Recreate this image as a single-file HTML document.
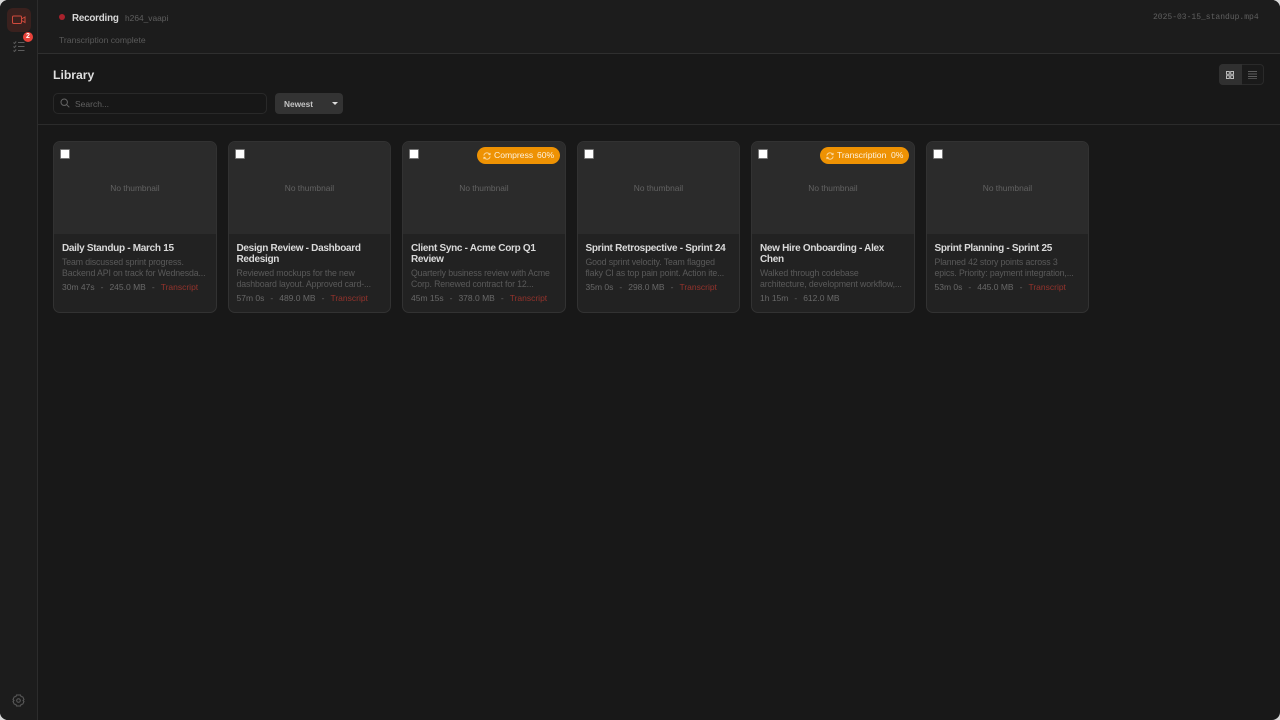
<!DOCTYPE html>
<html><head><meta charset="utf-8">
<style>
*{box-sizing:border-box;margin:0;padding:0}
html,body{width:1280px;height:720px;overflow:hidden;background:#d8d8d8}
body{font-family:"Liberation Sans",sans-serif;position:relative}
.abs,.abs *{white-space:nowrap}
.abs{position:absolute}
#win{position:absolute;left:0;top:0;width:1280px;height:720px;background:#181818;border-radius:8px;overflow:hidden}
#side{position:absolute;left:0;top:0;width:38px;height:720px;background:#1c1c1c;border-right:1px solid #2c2c2c}
#top{position:absolute;left:38px;top:0;width:1242px;height:54px;background:#1c1c1c;border-bottom:1px solid #2f2f2f}
#hr{position:absolute;left:38px;top:124px;width:1242px;height:1px;background:#2b2b2b}
.card{position:absolute;top:141px;width:163.9px;height:172px;background:#222;border:1px solid #323232;border-radius:7px;overflow:hidden}
.th{position:absolute;left:0;top:0;width:100%;height:92px;background:#2b2b2b}
.nt{position:absolute;left:0;top:41px;width:100%;text-align:center;font-size:8.4px;line-height:11px;color:#626262}
.cb{position:absolute;left:6px;top:7px;width:10px;height:10px;background:#fff;border:1px solid #777;border-radius:1px}
.t{position:absolute;left:8px;top:100.5px;font-size:10px;line-height:11.5px;font-weight:700;color:#dadada;letter-spacing:-.3px;white-space:nowrap}
.d{position:absolute;left:8px;font-size:8.75px;line-height:11px;color:#5a5a5a;letter-spacing:-.12px;white-space:nowrap}
.m{position:absolute;left:8px;font-size:8.5px;line-height:11px;color:#686868;white-space:nowrap}
.m span{margin:0 6px}
.m b{font-weight:400;color:#94332c}
.bd{position:absolute;top:5px;height:17px;border-radius:9px;background:#ee9203;color:#fdf2df;font-size:8.6px;line-height:17px;white-space:nowrap}
.bd svg{position:absolute;left:6px;top:4.5px}
.bd i{position:absolute;top:0;font-style:normal}
</style></head><body>
<div id="win">
<div id="side"></div>
<div id="top"></div>
<div id="hr"></div>

<div class="abs" style="left:7px;top:8px;width:24px;height:24px;border-radius:6px;background:#3a211e"></div>
<svg class="abs" style="left:12px;top:14px" width="14" height="12" viewBox="0 0 14 12" fill="none" stroke="#d04a3c" stroke-width="1"><rect x=".5" y="2" width="9" height="7.5" rx="1.2"/><path d="M9.5 5l3.5-2v5.5l-3.5-2"/></svg>
<svg class="abs" style="left:13px;top:41px" width="12" height="11" viewBox="0 0 12 11" fill="none" stroke="#5c5c5c" stroke-width="1"><path d="M5 1.5h6.5M5 5.5h6.5M5 9.5h6.5M.5 1.5l1 1 1.7-2M.5 5.5l1 1 1.7-2M.5 9.5l1 1 1.7-2"/></svg>
<div class="abs" style="left:23px;top:32px;width:10px;height:10px;border-radius:50%;background:#e8423a;color:#fff;font-size:7px;line-height:10px;font-weight:700;text-align:center">2</div>
<svg class="abs" style="left:12px;top:694px" width="13" height="13" viewBox="0 0 13 13" fill="none" stroke="#5c5c5c" stroke-width="1"><path d="M4.5 1h4l.6 1.6 1.7.3 1.2 2.6-1 1 1 1-1.2 2.6-1.7.3-.6 1.6h-4l-.6-1.6-1.7-.3L1 7.5l1-1-1-1 1.2-2.6 1.7-.3z"/><circle cx="6.5" cy="6.5" r="1.8"/></svg>

<div class="abs" style="left:59px;top:14px;width:6px;height:6px;border-radius:50%;background:#a8222c"></div>
<div class="abs" style="left:72px;top:11.5px;font-size:9.8px;line-height:13px;font-weight:700;color:#d8d8d8;letter-spacing:-.2px">Recording</div>
<div class="abs" style="left:125px;top:11.5px;font-size:8.4px;line-height:13px;color:#5f5f5f">h264_vaapi</div>
<div class="abs" style="left:59px;top:34px;font-size:8.6px;line-height:12px;color:#5a5a5a">Transcription complete</div>
<div class="abs" style="left:1153px;top:11.5px;font-size:8px;line-height:12px;color:#5f5f5f;font-family:'Liberation Mono',monospace">2025-03-15_standup.mp4</div>

<div class="abs" style="left:53px;top:66.5px;font-size:12.2px;line-height:16px;font-weight:700;color:#dedede">Library</div>

<div class="abs" style="left:1219px;top:64px;width:45px;height:21px;border:1px solid #2a2a2a;border-radius:4px;background:#1a1a1a"></div>
<div class="abs" style="left:1219px;top:64px;width:23px;height:21px;border-radius:4px 0 0 4px;background:#303030"></div>
<svg class="abs" style="left:1226px;top:71px" width="8" height="8" viewBox="0 0 8 8" fill="none" stroke="#bdbdbd" stroke-width="1"><rect x=".5" y=".5" width="2.8" height="2.8"/><rect x="4.7" y=".5" width="2.8" height="2.8"/><rect x=".5" y="4.7" width="2.8" height="2.8"/><rect x="4.7" y="4.7" width="2.8" height="2.8"/></svg>
<svg class="abs" style="left:1248px;top:71px" width="9" height="8" viewBox="0 0 9 8" fill="none" stroke="#5e5e5e" stroke-width="1"><path d="M0 .5h9M0 3h9M0 5.5h9M0 7.7h9" /></svg>

<div class="abs" style="left:53px;top:93px;width:214px;height:21px;border:1px solid #292929;border-radius:5px;background:#171717"></div>
<svg class="abs" style="left:60px;top:98px" width="10" height="10" viewBox="0 0 10 10" fill="none" stroke="#666" stroke-width="1"><circle cx="4.2" cy="4.2" r="3.2"/><path d="M6.7 6.7l2.6 2.6"/></svg>
<div class="abs" style="left:75px;top:97.5px;font-size:8.5px;line-height:12px;color:#626262">Search...</div>

<div class="abs" style="left:275px;top:93px;width:68px;height:21px;border-radius:4px;background:#333"></div>
<div class="abs" style="left:284px;top:97.5px;font-size:8.3px;line-height:12px;font-weight:700;color:#c4c4c4">Newest</div>
<div class="abs" style="left:332px;top:102px;width:0;height:0;border-left:3px solid transparent;border-right:3px solid transparent;border-top:3.5px solid #ddd"></div>

<div class="card" style="left:53px"><div class="th"></div><div class="nt">No thumbnail</div><div class="cb"></div>
<div class="t">Daily Standup - March 15</div>
<div class="d" style="top:115px">Team discussed sprint progress.<br>Backend API on track for Wednesda...</div>
<div class="m" style="top:140px">30m 47s<span>-</span>245.0 MB<span>-</span><b>Transcript</b></div></div>

<div class="card" style="left:227.5px"><div class="th"></div><div class="nt">No thumbnail</div><div class="cb"></div>
<div class="t">Design Review - Dashboard<br>Redesign</div>
<div class="d" style="top:126px">Reviewed mockups for the new<br>dashboard layout. Approved card-...</div>
<div class="m" style="top:151px">57m 0s<span>-</span>489.0 MB<span>-</span><b>Transcript</b></div></div>

<div class="card" style="left:402px"><div class="th"></div><div class="nt">No thumbnail</div><div class="cb"></div>
<div class="bd" style="left:74px;width:83px"><svg width="8" height="8" viewBox="0 0 9 9" fill="none" stroke="#fbdca8" stroke-width="1"><path d="M1 4a3.5 3.5 0 0 1 6-2l1 1M8 5a3.5 3.5 0 0 1-6 2L1 6M8 1v2H6M1 8V6h2"/></svg><i style="left:17px">Compress</i><i style="left:60px">60%</i></div>
<div class="t">Client Sync - Acme Corp Q1<br>Review</div>
<div class="d" style="top:126px">Quarterly business review with Acme<br>Corp. Renewed contract for 12...</div>
<div class="m" style="top:151px">45m 15s<span>-</span>378.0 MB<span>-</span><b>Transcript</b></div></div>

<div class="card" style="left:576.5px"><div class="th"></div><div class="nt">No thumbnail</div><div class="cb"></div>
<div class="t">Sprint Retrospective - Sprint 24</div>
<div class="d" style="top:115px">Good sprint velocity. Team flagged<br>flaky CI as top pain point. Action ite...</div>
<div class="m" style="top:140px">35m 0s<span>-</span>298.0 MB<span>-</span><b>Transcript</b></div></div>

<div class="card" style="left:751px"><div class="th"></div><div class="nt">No thumbnail</div><div class="cb"></div>
<div class="bd" style="left:68px;width:89px"><svg width="8" height="8" viewBox="0 0 9 9" fill="none" stroke="#fbdca8" stroke-width="1"><path d="M1 4a3.5 3.5 0 0 1 6-2l1 1M8 5a3.5 3.5 0 0 1-6 2L1 6M8 1v2H6M1 8V6h2"/></svg><i style="left:17px">Transcription</i><i style="left:71px">0%</i></div>
<div class="t">New Hire Onboarding - Alex<br>Chen</div>
<div class="d" style="top:126px">Walked through codebase<br>architecture, development workflow,...</div>
<div class="m" style="top:151px">1h 15m<span>-</span>612.0 MB</div></div>

<div class="card" style="left:925.5px"><div class="th"></div><div class="nt">No thumbnail</div><div class="cb"></div>
<div class="t">Sprint Planning - Sprint 25</div>
<div class="d" style="top:115px">Planned 42 story points across 3<br>epics. Priority: payment integration,...</div>
<div class="m" style="top:140px">53m 0s<span>-</span>445.0 MB<span>-</span><b>Transcript</b></div></div>
</div>
</body></html>
